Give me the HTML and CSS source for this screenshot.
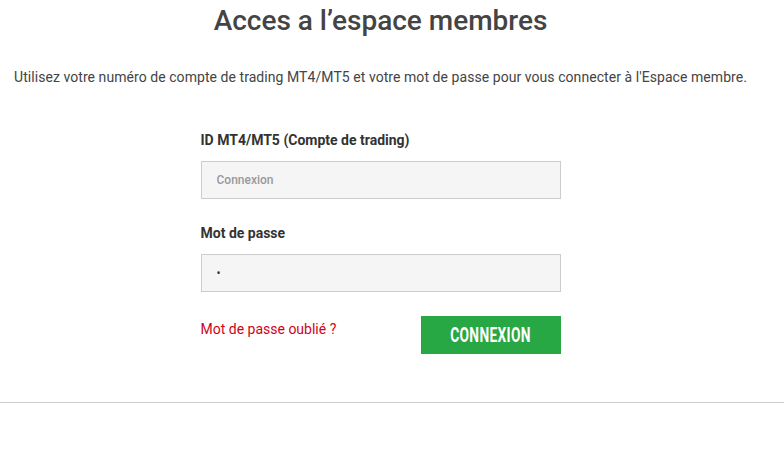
FILE: index.html
```html
<!DOCTYPE html>
<html lang="fr">
<head>
<meta charset="utf-8">
<title>Acces a l'espace membres</title>
<link rel="stylesheet" href="styles.css">
</head>
<body>
<main class="page">
  <div class="content">
    <h1 class="title">Acces a l’espace membres</h1>
    <p class="intro">Utilisez votre numéro de compte de trading MT4/MT5 et votre mot de passe pour vous connecter à l'Espace membre.</p>
    <form class="form">
      <label class="label" for="login">ID MT4/MT5 (Compte de trading)</label>
      <input class="input" id="login" type="text" placeholder="Connexion">
      <label class="label label-pass" for="pass">Mot de passe</label>
      <input class="input" id="pass" type="password" value="a">
      <div class="actions">
        <a class="forgot" href="#">Mot de passe oublié ?</a>
        <button class="btn" type="button"><span class="btn-text">CONNEXION</span></button>
      </div>
    </form>
  </div>
  <hr class="rule">
</main>
</body>
</html>
```
FILE: styles.css
```css
html, body {
  margin: 0;
  padding: 0;
  background: #fff;
}
body {
  font-family: Roboto, "Liberation Sans", Arial, sans-serif;
  color: #444;
}
.page {
  display: flex;
  flex-direction: column;
}
.content {
  width: 761px;
  display: flex;
  flex-direction: column;
}
.title {
  margin: 0;
  padding-top: 4px;
  font-size: 28px;
  font-weight: 500;
  line-height: 34px;
  text-align: center;
  color: #444;
}
.intro {
  margin: 29px 0 0 14px;
  font-size: 14px;
  line-height: 20px;
  letter-spacing: 0.06px;
  color: #444;
  white-space: nowrap;
}
.form {
  width: 360px;
  margin: 43px auto 0;
  display: flex;
  flex-direction: column;
}
.label {
  font-size: 14px;
  font-weight: 700;
  line-height: 20px;
  color: #333;
}
.label-pass {
  margin-top: 24px;
}
.input {
  margin-top: 11px;
  box-sizing: border-box;
  height: 38px;
  width: 360px;
  border: 1px solid #ccc;
  background: #f5f5f5;
  padding: 0 15px;
  font-family: Roboto, "Liberation Sans", Arial, sans-serif;
  font-size: 12px;
  color: #333;
  outline: none;
}
.input::placeholder {
  color: #999;
  font-weight: 500;
}
.actions {
  margin-top: 24px;
  display: flex;
  justify-content: space-between;
  align-items: flex-start;
}
.forgot {
  margin-top: 3px;
  font-size: 14px;
  line-height: 20px;
  color: #d0021b;
  text-decoration: none;
}
.btn {
  width: 140px;
  height: 38px;
  border: 0;
  background: #28a745;
  color: #fff;
  padding: 0;
  cursor: pointer;
  display: flex;
  align-items: center;
  justify-content: center;
}
.btn-text {
  display: inline-block;
  font-family: Roboto, "Liberation Sans", sans-serif;
  font-weight: 700;
  font-size: 21px;
  line-height: 24px;
  letter-spacing: 0.5px;
  transform: scaleX(0.655);
}
.rule {
  margin: 48px 0 0;
  border: 0;
  border-top: 1px solid #ccc;
  height: 0;
  width: 100%;
}
```
